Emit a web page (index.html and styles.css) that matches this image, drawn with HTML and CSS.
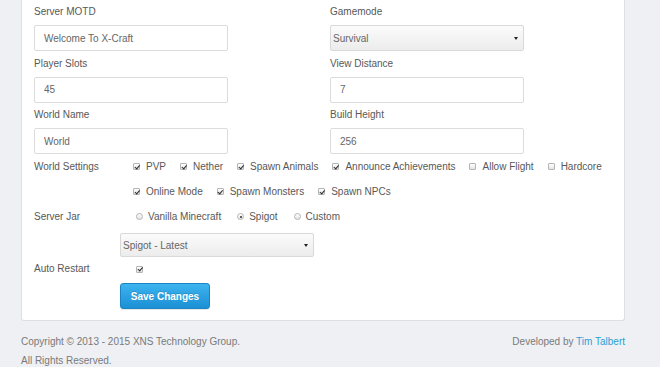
FILE: index.html
```html
<!DOCTYPE html>
<html lang="en">

<head>
    <meta charset="UTF-8">
    <meta name="viewport" content="width=device-width, initial-scale=1.0">
    <title>Server Settings - XNS</title>
    <link rel="stylesheet" href="styles.css">
</head>

<body>

<div class="page">
    <div class="panel">

        <div class="fields">
            <div class="col">
                <div class="field">
                    <label for="motdInput">Server MOTD</label>
                    <input type="text" id="motdInput" value="Welcome To X-Craft">
                </div>
                <div class="field">
                    <label for="slotsInput">Player Slots</label>
                    <input type="text" id="slotsInput" value="45">
                </div>
                <div class="field">
                    <label for="worldInput">World Name</label>
                    <input type="text" id="worldInput" value="World">
                </div>
            </div>
            <div class="col">
                <div class="field">
                    <label>Gamemode</label>
                    <div class="select">
                        <span>Survival</span>
                        <span class="caret"></span>
                    </div>
                </div>
                <div class="field">
                    <label for="viewInput">View Distance</label>
                    <input type="text" id="viewInput" value="7">
                </div>
                <div class="field">
                    <label for="heightInput">Build Height</label>
                    <input type="text" id="heightInput" value="256">
                </div>
            </div>
        </div>

        <div class="setting">
            <div class="setting-label">World Settings</div>
            <div class="setting-body checks">
                <div class="option-line">
                    <label class="option"><span class="box on"></span>PVP</label>
                    <label class="option"><span class="box on"></span>Nether</label>
                    <label class="option"><span class="box on"></span>Spawn Animals</label>
                    <label class="option"><span class="box on"></span>Announce Achievements</label>
                    <label class="option"><span class="box"></span>Allow Flight</label>
                    <label class="option"><span class="box"></span>Hardcore</label>
                </div>
                <div class="option-line">
                    <label class="option"><span class="box on"></span>Online Mode</label>
                    <label class="option"><span class="box on"></span>Spawn Monsters</label>
                    <label class="option"><span class="box on"></span>Spawn NPCs</label>
                </div>
            </div>
        </div>

        <div class="setting">
            <div class="setting-label">Server Jar</div>
            <div class="setting-body radios">
                <div class="option-line">
                    <label class="option"><span class="dot"></span>Vanilla Minecraft</label>
                    <label class="option"><span class="dot on"></span>Spigot</label>
                    <label class="option"><span class="dot"></span>Custom</label>
                </div>
            </div>
        </div>

        <div class="setting">
            <div class="setting-label"></div>
            <div class="setting-body">
                <div class="select jar-select">
                    <span>Spigot - Latest</span>
                    <span class="caret"></span>
                </div>
            </div>
        </div>

        <div class="setting short">
            <div class="setting-label">Auto Restart</div>
            <div class="setting-body radios">
                <span class="box on"></span>
            </div>
        </div>

        <div class="setting">
            <div class="setting-label"></div>
            <div class="setting-body">
                <button class="blue">Save Changes</button>
            </div>
        </div>

    </div>

    <div class="footer">
        <div>
            Copyright &copy; 2013 - 2015 XNS Technology Group.<br>
            All Rights Reserved.
        </div>
        <div>Developed by <a href="#">Tim Talbert</a></div>
    </div>
</div>

</body>

</html>
```

FILE: styles.css
```css
body {
    font-family: 'Liberation Sans', Arial, sans-serif;
    font-size: 10px;
    background-color: #eef0f3;
    color: #585858;
    margin: 0;
}

.page {
    width: 604px;
    margin-left: 21px;
}

.panel {
    margin-top: -10px;
    padding: 15px 12px 11px 12px;
    background-color: #fff;
    border: 1px solid #dcdfe3;
    border-top: none;
    border-radius: 0 0 3px 3px;
}

/* deux colonnes de champs */
.fields {
    display: flex;
}

.col {
    width: 296px;
    flex: none;
    display: flex;
    flex-direction: column;
    gap: 5.5px;
}

.field label {
    display: block;
    line-height: 14px;
    margin-bottom: 6px;
}

.field input {
    box-sizing: border-box;
    width: 194px;
    height: 26px;
    padding: 0 9px;
    border: 1px solid #dcdcdc;
    border-radius: 2px;
    font-family: inherit;
    font-size: 10px;
    color: #666;
}

.select {
    box-sizing: border-box;
    width: 194px;
    height: 26px;
    padding: 0 5px 0 2px;
    display: flex;
    align-items: center;
    justify-content: space-between;
    border: 1px solid #d9d9d9;
    border-radius: 2px;
    background: linear-gradient(#fbfbfb, #ececec);
    color: #666;
}

.jar-select {
    height: 24px;
}

.caret {
    width: 0;
    height: 0;
    border-left: 2.5px solid transparent;
    border-right: 2.5px solid transparent;
    border-top: 3.5px solid #222;
}

/* lignes d'options */
.setting {
    display: flex;
}

.setting-label {
    width: 86px;
    flex: none;
    line-height: 25px;
}

.short .setting-label {
    line-height: 24px;
}

.setting-body {
    flex: 1;
}

.checks {
    padding-left: 13px;
}

.radios {
    padding-left: 16px;
}

.short .radios {
    display: flex;
    align-items: center;
    height: 24px;
}

.option-line {
    display: flex;
    height: 25px;
    align-items: center;
    gap: 14px;
}

.radios .option-line {
    gap: 16px;
}

.option {
    display: flex;
    align-items: center;
}

.box,
.dot {
    position: relative;
    box-sizing: border-box;
    width: 7px;
    height: 7px;
    margin-right: 6px;
    border: 1px solid #b4b4b4;
    background: linear-gradient(#fff, #e4e4e4);
}

.box {
    border-radius: 1px;
}

.dot {
    border-radius: 50%;
    margin-right: 5px;
}

.box.on::after {
    content: "";
    position: absolute;
    left: 1.5px;
    top: -0.5px;
    width: 1.5px;
    height: 3.5px;
    border-right: 1.5px solid #2b2b2b;
    border-bottom: 1.5px solid #2b2b2b;
    transform: rotate(40deg);
}

.dot.on::after {
    content: "";
    position: absolute;
    left: 1.5px;
    top: 1.5px;
    width: 2px;
    height: 2px;
    border-radius: 50%;
    background-color: #333;
}

.jar-select {
    margin-top: 4px;
}

button {
    margin-top: 2px;
    width: 90px;
    height: 26px;
    border: 1px solid #1a84c4;
    border-radius: 3px;
    cursor: pointer;
    font-family: inherit;
    font-size: 10px;
    font-weight: bold;
}

/* bouton bleu */
button.blue {
    background: linear-gradient(#3db3ef, #1b90d5);
    color: #fff;
    text-shadow: 0 -1px 0 rgba(0, 0, 0, 0.15);
    box-shadow: 0 1px 1px rgba(0, 0, 0, 0.1);
}

.footer {
    display: flex;
    justify-content: space-between;
    margin-top: 11px;
    line-height: 19px;
    color: #7a7a7a;
}

.footer a {
    color: #2a9fd6;
    text-decoration: none;
}
```
